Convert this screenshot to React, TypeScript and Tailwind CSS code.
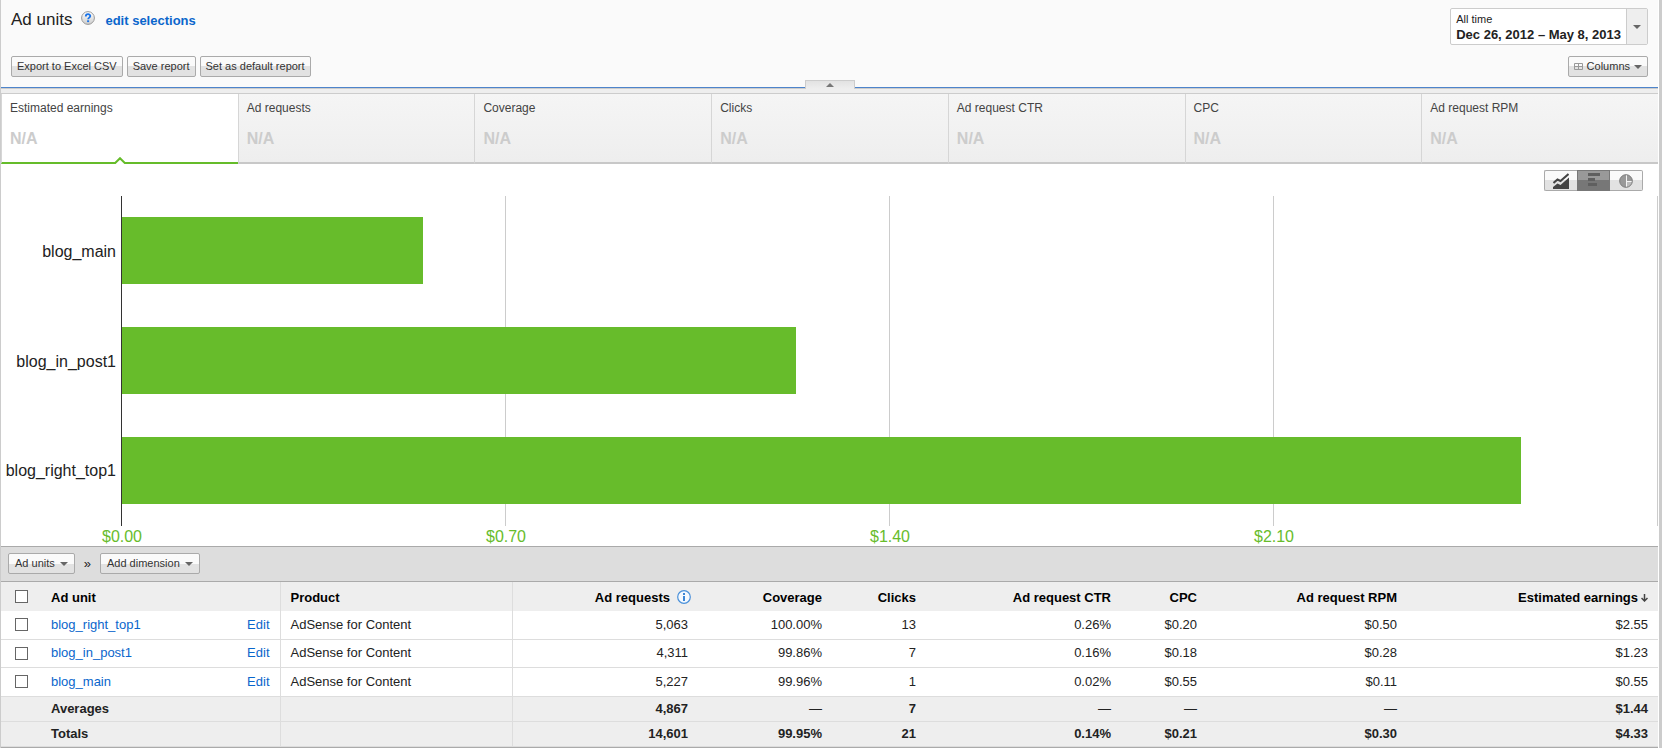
import clsx from 'clsx'

const metrics = ['Estimated earnings', 'Ad requests', 'Coverage', 'Clicks', 'Ad request CTR', 'CPC', 'Ad request RPM']

const bars = [
  { name: 'blog_main', value: 0.55 },
  { name: 'blog_in_post1', value: 1.23 },
  { name: 'blog_right_top1', value: 2.55 },
]

const ticks = ['$0.00', '$0.70', '$1.40', '$2.10']
const chartMax = 2.8

const rows = [
  { unit: 'blog_right_top1', product: 'AdSense for Content', values: ['5,063', '100.00%', '13', '0.26%', '$0.20', '$0.50', '$2.55'] },
  { unit: 'blog_in_post1', product: 'AdSense for Content', values: ['4,311', '99.86%', '7', '0.16%', '$0.18', '$0.28', '$1.23'] },
  { unit: 'blog_main', product: 'AdSense for Content', values: ['5,227', '99.96%', '1', '0.02%', '$0.55', '$0.11', '$0.55'] },
]

const summary = [
  { label: 'Averages', values: ['4,867', '—', '7', '—', '—', '—', '$1.44'] },
  { label: 'Totals', values: ['14,601', '99.95%', '21', '0.14%', '$0.21', '$0.30', '$4.33'] },
]

const buttonFace = 'border border-[#aaa] bg-linear-to-b from-[#fafafa] from-50% to-[#e2e2e2] to-50%'

function Caret() {
  return (
    <svg width="8" height="4" viewBox="0 0 8 4" className="shrink-0" aria-hidden="true">
      <path d="M0 0h8L4 4z" fill="#666" />
    </svg>
  )
}

function ToolButton({ children, className = 'gap-1 px-[5px]' }: { children: React.ReactNode; className?: string }) {
  return (
    <button
      type="button"
      className={clsx('flex h-[21px] items-center rounded-xs text-[11px] leading-none whitespace-nowrap text-[#333]', buttonFace, className)}
    >
      {children}
    </button>
  )
}

function Checkbox({ label }: { label: string }) {
  return (
    <input
      type="checkbox"
      aria-label={label}
      className="block size-[13px] appearance-none border border-[#666] bg-white checked:bg-[#666]"
    />
  )
}

function Header() {
  return (
    <header className="relative flex justify-between border-b border-[#4d84cb] bg-[#fafafa] pt-2 pr-[10px] pb-[10px] pl-[10px]">
      <div className="flex flex-col justify-between">
        <div className="flex items-baseline">
          <h1 className="text-[17px] leading-6 text-[#222]">Ad units</h1>
          <button type="button" aria-label="Help" className="ml-[9px] self-start pt-[3px]">
            <svg width="14" height="14" viewBox="0 0 14 14" className="block">
              <defs>
                <linearGradient id="help" x1="0" y1="0" x2="0" y2="1">
                  <stop offset="0" stopColor="#fff" />
                  <stop offset="1" stopColor="#ccc" />
                </linearGradient>
              </defs>
              <circle cx="7" cy="7" r="6.4" fill="url(#help)" stroke="#999" />
              <path d="M4.8 5.4c0-2.9 4.5-2.8 4.5-.3 0 1.5-2.2 1.6-2.2 3.2" fill="none" stroke="#1a73e8" strokeWidth="1.8" />
              <path d="M6.1 9.3h2v1.8h-2z" fill="#1a73e8" />
            </svg>
          </button>
          <a href="#selections" className="ml-[10px] text-[13px] leading-6 font-bold text-[#0a66cc]">edit selections</a>
        </div>
        <div className="flex gap-1">
          <ToolButton>Export to Excel CSV</ToolButton>
          <ToolButton>Save report</ToolButton>
          <ToolButton>Set as default report</ToolButton>
        </div>
      </div>

      <div className="flex flex-col items-end gap-[11px]">
        <button type="button" className="flex h-[37px] rounded-xs border border-[#ccc] bg-white text-left">
          <span className="flex h-full flex-col justify-center px-[5px] text-[#222]">
            <span className="text-[11px] leading-[15px]">All time</span>
            <span className="text-[13px] leading-[15px] font-bold">Dec 26, 2012 – May 8, 2013</span>
          </span>
          <span className="flex h-full w-[21px] items-center justify-center border-l border-[#ccc] bg-[#eee]">
            <Caret />
          </span>
        </button>
        <ToolButton>
          <svg width="9" height="7" viewBox="0 0 9 7" aria-hidden="true">
            <path d="M.5.5h8v6h-8zM4.5.5v6M.5 3.5h8" fill="none" stroke="#999" />
          </svg>
          Columns
          <Caret />
        </ToolButton>
      </div>

      <button
        type="button"
        aria-label="Collapse header"
        className="absolute -bottom-[2px] left-1/2 flex h-[9px] w-[50px] -translate-x-1/2 items-center justify-center border border-b-0 border-[#ccc] bg-linear-to-b from-[#e2e2e2] to-[#eee]"
      >
        <svg width="8" height="4" viewBox="0 0 8 4">
          <path d="M0 4h8L4 0z" fill="#777" />
        </svg>
      </button>
    </header>
  )
}

function Metrics() {
  return (
    <div className="border-t border-[#ccc] bg-[#eee] pt-1">
      <div className="grid grid-cols-7 border-t border-[#ccc]">
        {metrics.map((name, i) => (
          <button
            key={name}
            type="button"
            className={clsx(
              'relative flex h-[70px] flex-col items-start border-b-2 border-l border-l-[#d6d6d6] px-2 text-left',
              i === 0 ? 'border-b-[#65bc2a] bg-white' : 'border-b-[#c8c8c8] bg-linear-to-b from-[#f5f5f5] to-[#eee]',
            )}
          >
            <span className="mt-[6px] text-[12px] leading-4 text-[#444]">{name}</span>
            <span className="mt-[13px] text-[16px] leading-5 font-bold text-[#ccc]">N/A</span>
            {i === 0 && (
              <svg width="12" height="7" viewBox="0 0 12 7" className="absolute -bottom-[2px] left-1/2 -translate-x-1/2" aria-hidden="true">
                <path d="M0 7l6-6 6 6z" fill="#fff" />
                <path d="M0 6h1.2L6 1.2 10.8 6H12" fill="none" stroke="#65bc2a" strokeWidth="2" />
              </svg>
            )}
          </button>
        ))}
      </div>
    </div>
  )
}

function ChartTypes() {
  return (
    <div className="absolute top-[6px] right-[15px] flex h-[21px] rounded-xs">
      <button type="button" aria-label="Line chart" className={clsx('flex w-[33px] items-center justify-center rounded-l-xs border-r-0', buttonFace)}>
        <svg width="16" height="16" viewBox="0 0 16 16">
          <path d="M.5 10l4-3.500 3 1.500L15.500 1" fill="none" stroke="#444" strokeWidth="2" />
          <path d="M0 16v-2l4.500-3.500 3 1.500L16 4.500V16z" fill="#444" />
        </svg>
      </button>
      <button type="button" aria-label="Bar chart" className="w-[33px] border border-[#777] bg-linear-to-b from-[#999] from-50% to-[#777] to-50%">
        <svg width="31" height="19" viewBox="0 0 31 19" className="block">
          <path d="M10 2h12v3H10zM10 7h7v3h-7zM10 12h9v3h-9z" fill="#5f5f5f" />
        </svg>
      </button>
      <button type="button" aria-label="Pie chart" className={clsx('flex w-[33px] items-center justify-center rounded-r-xs border-l-0', buttonFace)}>
        <svg width="14" height="14" viewBox="0 0 14 14">
          <circle cx="7" cy="7" r="6.5" fill="#999" />
          <path d="M7 7h6.5A6.5 6.5 0 0 1 7 13.5z" fill="#bbb" />
          <path d="M7.500 .5v13M7 7.500h6.500" stroke="#f4f4f4" />
          <circle cx="7" cy="7" r="6.3" fill="none" stroke="#808080" />
        </svg>
      </button>
    </div>
  )
}

function Chart() {
  return (
    <section aria-label="Estimated earnings by ad unit" className="relative flex bg-white pt-8">
      <ChartTypes />
      <div className="flex h-[330px] w-[120px] shrink-0 flex-col pt-px pr-[5px] text-right text-[16px] text-[#222]">
        {bars.map((bar) => (
          <div key={bar.name} className="flex flex-1 items-center justify-end">{bar.name}</div>
        ))}
      </div>
      <div className="flex-1">
        <div className="relative h-[330px]">
          <div className="absolute inset-0 grid grid-cols-4 border-r border-[#ccc]">
            {ticks.map((tick, i) => (
              <div key={tick} className={clsx('border-l', i === 0 ? 'border-[#333]' : 'border-[#ccc]')} />
            ))}
          </div>
          <div className="relative flex h-full flex-col">
            {bars.map((bar) => (
              <div key={bar.name} className="flex-1 pt-[21px]">
                <div className="h-[67px] border-l border-[#333] bg-[#67bc2b]" style={{ width: `${(bar.value / chartMax) * 100}%` }} />
              </div>
            ))}
          </div>
        </div>
        <div className="grid h-5 grid-cols-4 pl-px text-[16px] leading-[22px] text-[#67bc2b]">
          {ticks.map((tick) => (
            <div key={tick}>
              <span className="inline-block -translate-x-1/2">{tick}</span>
            </div>
          ))}
        </div>
      </div>
    </section>
  )
}

function InfoIcon() {
  return (
    <svg width="14" height="14" viewBox="0 0 14 14" aria-hidden="true">
      <circle cx="7" cy="7" r="6.3" fill="#f4f9ff" stroke="#4a90d9" strokeWidth="1.2" />
      <path d="M6 3h2v2H6zM6 6h2v5H6z" fill="#3b86d6" />
    </svg>
  )
}

function SortArrow() {
  return (
    <svg width="7" height="8" viewBox="0 0 7 8" aria-hidden="true">
      <path d="M3.5 0v7M.5 4l3 3 3-3" fill="none" stroke="#444" strokeWidth="1.5" />
    </svg>
  )
}

function ReportTable() {
  return (
    <table className="w-full table-fixed border-collapse text-[13px] leading-4 text-[#222]">
      <colgroup>
        <col className="w-[50px]" />
        <col className="w-[229px]" />
        <col className="w-[232px]" />
        <col className="w-[186px]" />
        <col className="w-[134px]" />
        <col className="w-[94px]" />
        <col className="w-[195px]" />
        <col className="w-[86px]" />
        <col className="w-[200px]" />
        <col />
      </colgroup>
      <thead>
        <tr className="h-[29px] bg-[#eee] text-black">
          <th className="pl-[14px]"><Checkbox label="Select all ad units" /></th>
          <th className="border-r border-[#ddd] pt-[3px] text-left">Ad unit</th>
          <th className="border-r border-[#ddd] pt-[3px] pl-[10px] text-left">Product</th>
          <th className="pt-[3px]">
            <div className="flex items-start justify-end gap-[7px] pr-[7px]">
              Ad requests
              <InfoIcon />
            </div>
          </th>
          {['Coverage', 'Clicks', 'Ad request CTR', 'CPC', 'Ad request RPM'].map((name) => (
            <th key={name} className="pt-[3px] pr-[10px] text-right">{name}</th>
          ))}
          <th className="pt-[3px]">
            <div className="flex items-center justify-end gap-[3px] pr-[10px]">
              Estimated earnings
              <SortArrow />
            </div>
          </th>
        </tr>
      </thead>
      <tbody>
        {rows.map((row) => (
          <tr key={row.unit} className="h-[28px] border-b border-[#ddd] bg-white last:h-[29px]">
            <td className="pl-[14px]"><Checkbox label={`Select ${row.unit}`} /></td>
            <td className="border-r border-[#ddd] pr-[10px]">
              <div className="flex justify-between text-[#0a66cc]">
                <a href={`#${row.unit}`}>{row.unit}</a>
                <a href={`#edit-${row.unit}`}>Edit</a>
              </div>
            </td>
            <td className="border-r border-[#ddd] pl-[10px]">{row.product}</td>
            {row.values.map((value, i) => (
              <td key={i} className="pr-[10px] text-right">{value}</td>
            ))}
          </tr>
        ))}
      </tbody>
      <tfoot className="bg-[#eee] font-bold">
        {summary.map((row) => (
          <tr key={row.label} className="h-[25px] border-b border-[#ddd]">
            <td />
            <th className="border-r border-[#ddd] text-left">{row.label}</th>
            <td className="border-r border-[#ddd]" />
            {row.values.map((value, i) => (
              <td key={i} className={clsx('pr-[10px] text-right', value === '—' && 'font-normal')}>{value}</td>
            ))}
          </tr>
        ))}
      </tfoot>
    </table>
  )
}

export default function App() {
  return (
    <div className="min-h-screen border-r-3 border-l border-[#ccc] bg-white pr-px font-['Liberation_Sans',Arial,sans-serif]">
      <Header />
      <Metrics />
      <Chart />
      <div className="flex items-center gap-[9px] border-y border-[#aaa] bg-[#ddd] pt-[6px] pb-[7px] pl-[7px]">
        <ToolButton className="gap-[5px] px-[6px]">
          Ad units
          <Caret />
        </ToolButton>
        <span className="text-[13px] leading-4 text-[#222]">»</span>
        <ToolButton className="gap-[5px] px-[6px]">
          Add dimension
          <Caret />
        </ToolButton>
      </div>
      <ReportTable />
      <div className="border-t border-[#aaa]" />
    </div>
  )
}
